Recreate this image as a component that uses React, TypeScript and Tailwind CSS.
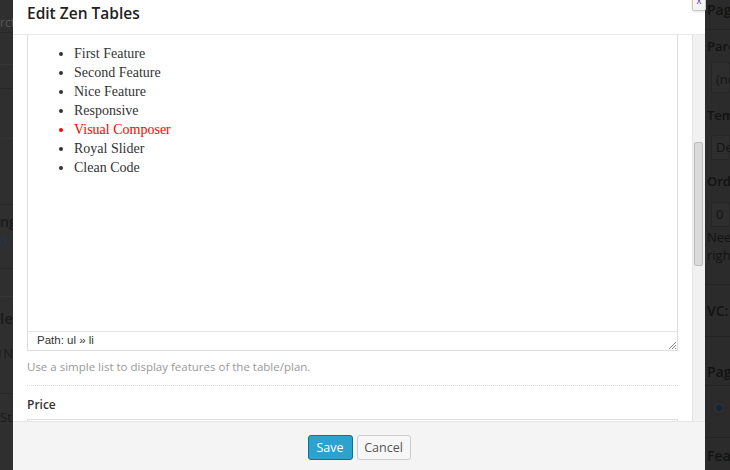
import React from "react";

const ui = { fontFamily: '"Open Sans", "Liberation Sans", sans-serif' };
const serif = { fontFamily: '"Liberation Serif", "DejaVu Serif", serif' };
const arial = { fontFamily: '"Liberation Sans", Arial, sans-serif' };

function LeftStrip() {
  return (
    <div className="w-[13px] h-[470px] overflow-hidden bg-[#2f2f2f] flex flex-col whitespace-nowrap text-[13px] text-[#202020]" style={ui}>
      <div className="h-[33px] border-b border-[#282828] flex items-start pt-[16px] text-[12px] leading-[14px] text-[#5a5a5a]">rct</div>
      <div className="h-[32px] border-b border-[#353535]" />
      <div className="h-[24px] border-b border-[#282828]" />
      <div className="h-[50px] border-b border-[#353535]" />
      <div className="h-[66px] border-b border-[#282828]" />
      <div className="h-[27px] flex items-end font-semibold text-[14px] text-[#1a1a1a]">ngl</div>
      <div className="h-[17px] flex items-center text-[12px] text-[#1f3550] underline decoration-dotted">d i</div>
      <div className="h-[20px] border-b border-[#282828]" />
      <div className="h-[28px] border-b border-[#353535]" />
      <div className="h-[42px] flex items-center font-semibold text-[15px] text-[#1a1a1a]">lea</div>
      <div className="h-[30px] flex items-center gap-[2px]">
        <span className="inline-block w-[12px] h-[12px] -ml-[6px] rounded-full border border-[#262626] bg-[#2c2c2c]" />
        <span className="text-[#1a1a1a]">N</span>
      </div>
      <div className="h-[25px] border-b border-[#282828]" />
      <div className="h-[30px] flex items-center pt-[18px] text-[#1a1a1a]">St</div>
    </div>
  );
}

function RightStrip() {
  return (
    <div className="w-[25px] h-[470px] overflow-hidden bg-[#2b2b2b] flex flex-col whitespace-nowrap text-[13px] text-[#121212] pl-[2px]" style={ui}>
      <div className="h-[30px] border-b border-[#242424] -mx-[2px] px-[2px] flex items-start pt-[1px] text-[14px] font-semibold leading-[18px]">Page</div>
      <div className="h-[31px] flex items-center pt-[2px] font-semibold">Parent</div>
      <div className="h-[31px] ml-[4px] mt-[1px] border border-[#262626] bg-[#2e2e2e] flex items-center pl-[4px] pt-[4px] text-[#141414]">(no parent)</div>
      <div className="h-[42px] flex items-center pt-[4px] font-semibold">Template</div>
      <div className="h-[25px] ml-[4px] border border-[#262626] bg-[#2e2e2e] flex items-center pl-[4px] text-[#141414]">Default</div>
      <div className="h-[42px] flex items-center pt-[2px] font-semibold">Order</div>
      <div className="h-[25px] ml-[4px] border border-[#262626] bg-[#2e2e2e] flex items-center pl-[4px] text-[#141414]">0</div>
      <div className="h-[20px] flex items-end">Need</div>
      <div className="h-[18px] flex items-center">right</div>
      <div className="h-[20px] border-b border-[#242424] -mx-[2px]" />
      <div className="h-[52px] flex items-center font-semibold text-[14px] border-b border-[#242424] -mx-[2px] px-[2px]">VC:</div>
      <div className="h-[48px] flex items-center pt-[20px] font-semibold text-[14px]">Page</div>
      <div className="h-[25px] border-t border-[#242424] -mx-[2px] px-[2px] flex items-center pt-[20px]">
        <span className="inline-flex items-center justify-center w-[14px] h-[14px] ml-[5px] rounded-full border border-[#262626] bg-[#2e2e2e]">
          <span className="w-[6px] h-[6px] rounded-full bg-[#0a2a3e]" />
        </span>
      </div>
      <div className="h-[28px] border-b border-[#242424] -mx-[2px]" />
      <div className="h-[28px] flex items-end font-semibold text-[14px]">Feat</div>
    </div>
  );
}

export default function App() {
  const items = ["First Feature", "Second Feature", "Nice Feature", "Responsive", "Visual Composer", "Royal Slider", "Clean Code"];
  return (
    <div className="w-[730px] h-[470px] overflow-hidden flex bg-[#2e2e2e]" style={ui}>
      <LeftStrip />
      <div className="relative w-[692px] h-[470px] flex flex-col bg-white">
        <div className="h-[35px] shrink-0 border-b border-[#e8e8e8] flex items-start pl-[14px] pt-[1px]">
          <h1 className="text-[15.5px] leading-[24px] font-semibold text-[#222]" style={ui}>Edit Zen Tables</h1>
        </div>
        <div className="absolute right-[-1px] top-[-5px] w-[14px] h-[16px] bg-[#f4f4f4] border border-[#c8c8c8] rounded-[2px] flex justify-center text-[10px] leading-[10px] text-[#6a3fa0] shadow-sm" style={arial}>x</div>
        <div className="flex-1 flex min-h-0 overflow-hidden">
          <div className="flex-1 pl-[14px] pr-[14px] flex flex-col">
            <div className="border-l border-r border-b border-[#dedede] flex flex-col">
              <div className="h-[296px]">
                <ul className="list-disc pl-[46px] pt-[9px] text-[14px] leading-[19px] text-[#333]" style={serif}>
                  {items.map((t) => (
                    <li key={t} className={t === "Visual Composer" ? "text-[#ff0000]" : ""}>{t}</li>
                  ))}
                </ul>
              </div>
              <div className="relative h-[19px] border-t border-[#e6e6e6] flex items-center pl-[9px] text-[11.5px] text-[#333]" style={arial}>
                Path: ul » li
                <svg className="absolute right-[1px] bottom-[1px]" width="8" height="8" viewBox="0 0 8 8">
                  <path d="M1 8 L8 1 M4 8 L8 4 M7 8 L8 7" stroke="#888" strokeWidth="1" />
                </svg>
              </div>
            </div>
            <p className="mt-[7px] text-[11.5px] leading-[18px] text-[#999]" style={ui}>Use a simple list to display features of the table/plan.</p>
            <div className="mt-[9px] border-t border-dotted border-[#dcdcdc]" />
            <div className="mt-[10px] text-[12px] leading-[18px] font-semibold text-[#333]">Price</div>
            <div className="mt-[5px] h-[20px] border-t border-l border-r border-[#dddddd]" />
          </div>
          <div className="w-[13px] bg-[#f1f1f1] border-l border-[#e4e4e4] flex flex-col">
            <div className="h-[107px]" />
            <div className="ml-[1px] w-[9px] h-[124px] bg-[#dadada] border border-[#bdbdbd] rounded-[2px]" />
          </div>
        </div>
        <div className="h-[49px] shrink-0 bg-[#f4f4f4] border-t border-[#e5e5e5] flex justify-center items-start pt-[13px] gap-[4px]">
          <button className="h-[25px] w-[45px] rounded-[3px] bg-[#2ea2cc] border border-[#0074a2] text-white text-[12.5px] leading-[23px]" style={ui}>Save</button>
          <button className="h-[25px] w-[54px] rounded-[3px] bg-[#f7f7f7] border border-[#cccccc] text-[#555] text-[12.5px] leading-[23px]" style={ui}>Cancel</button>
        </div>
      </div>
      <RightStrip />
    </div>
  );
}
